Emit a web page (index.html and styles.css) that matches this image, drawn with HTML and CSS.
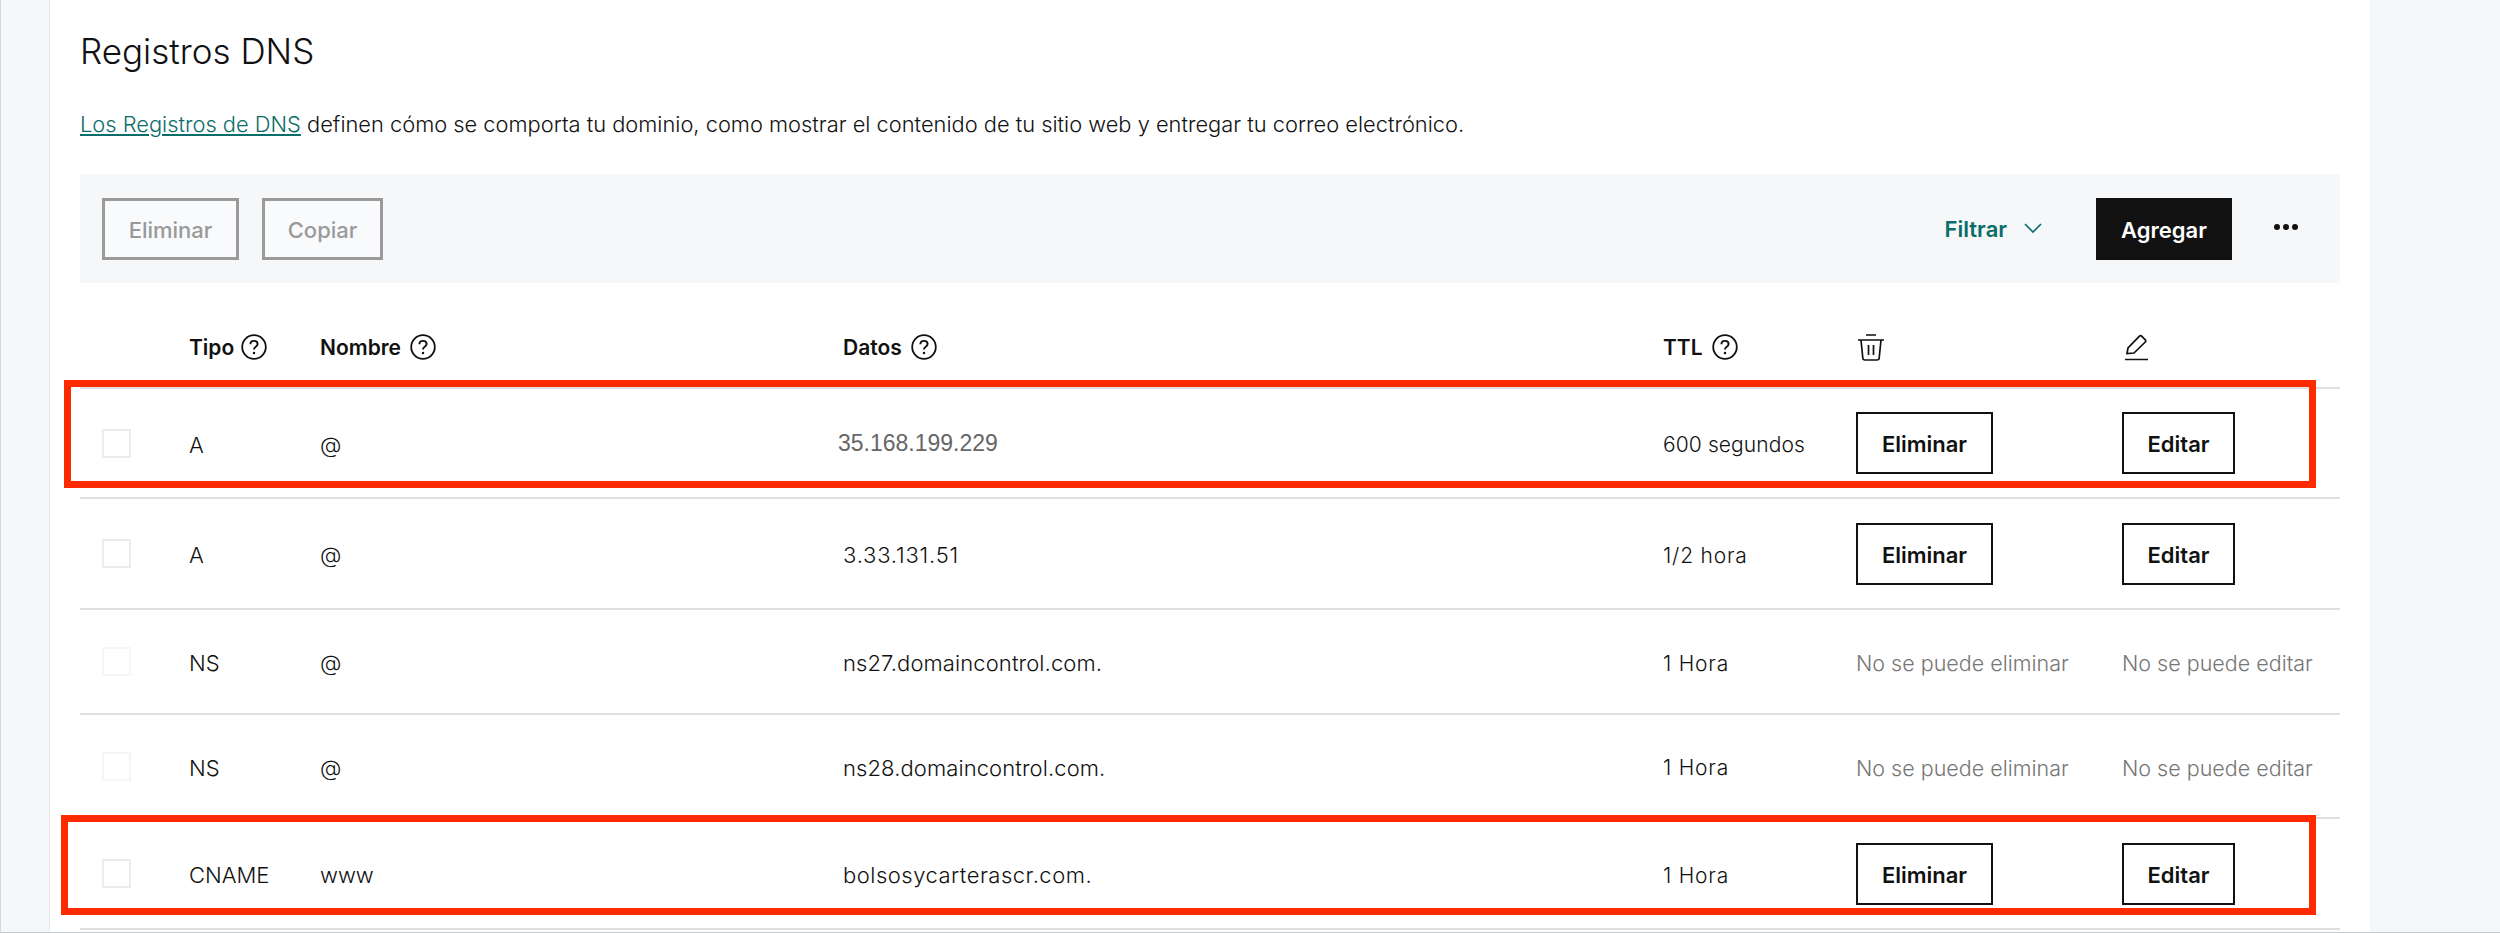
FILE: index.html
```html
<!DOCTYPE html>
<html lang="es">
<head>
    <meta charset="UTF-8">
    <meta name="viewport" content="width=device-width, initial-scale=1.0">
    <title>Registros DNS</title>
    <link rel="stylesheet" href="styles.css">
</head>
<body>
    <svg class="icon-defs" width="0" height="0">
        <symbol id="help" viewBox="0 0 26 26">
            <circle cx="13" cy="13" r="11.8" fill="none" stroke="currentColor" stroke-width="1.8"/>
            <path d="M9.4 10.2c0-2 1.6-3.3 3.6-3.3s3.6 1.3 3.6 3.1c0 1.6-1 2.3-2.1 3-1 .7-1.5 1.2-1.5 2.4" fill="none" stroke="currentColor" stroke-width="1.9"/>
            <circle cx="13" cy="19" r="1.25" fill="currentColor"/>
        </symbol>
    </svg>

    <main class="card">
        <h1>Registros DNS</h1>
        <p class="intro"><a href="#">Los Registros de DNS</a> definen cómo se comporta tu dominio, como mostrar el contenido de tu sitio web y entregar tu correo electrónico.</p>

        <div class="toolbar">
            <button class="btn btn-disabled btn-del">Eliminar</button>
            <button class="btn btn-disabled btn-copy">Copiar</button>
            <a class="filter" href="#">Filtrar
                <svg width="18" height="11" viewBox="0 0 18 11"><path d="M1 1l8 8 8-8" fill="none" stroke="currentColor" stroke-width="1.7"/></svg>
            </a>
            <button class="btn btn-primary">Agregar</button>
            <span class="more"><i></i><i></i><i></i></span>
        </div>

        <table class="records">
            <thead>
                <tr>
                    <th class="col-check"></th>
                    <th class="col-type"><span class="th-label">Tipo <svg class="help"><use href="#help"/></svg></span></th>
                    <th class="col-name"><span class="th-label">Nombre <svg class="help"><use href="#help"/></svg></span></th>
                    <th class="col-data"><span class="th-label">Datos <svg class="help"><use href="#help"/></svg></span></th>
                    <th class="col-ttl"><span class="th-label">TTL <svg class="help"><use href="#help"/></svg></span></th>
                    <th class="col-del">
                        <svg class="head-icon" width="26" height="27" viewBox="0 0 26 27" fill="none" stroke="currentColor" stroke-width="1.7">
                            <path d="M0 6h26M8 1h10M3 6l1.8 18c.1 1.300.9 2 2.200 2h12c1.300 0 2.100-.7 2.200-2L23 6M10.500 11v10M15.500 11v10"/>
                        </svg>
                    </th>
                    <th class="col-edit">
                        <svg class="head-icon head-icon-edit" width="24" height="27" viewBox="0 0 24 27" fill="none" stroke="currentColor" stroke-width="1.7">
                            <path d="M2 19.500l1-5.500L14.500 2.200c.6-.6 1.500-.6 2.100 0l3.700 3.700c.6.6.6 1.500 0 2.100L9 19l-7 .5zM0 25.500h23"/>
                        </svg>
                    </th>
                </tr>
            </thead>
            <tbody>
                <tr class="row-tall">
                    <td><span class="check"></span></td>
                    <td class="cell">A</td>
                    <td class="cell">@</td>
                    <td class="cell-edited"><span class="ip-edited">35.168.199.229</span></td>
                    <td class="cell ttl">600 segundos</td>
                    <td><button class="btn btn-outline btn-del">Eliminar</button></td>
                    <td><button class="btn btn-outline btn-edit">Editar</button></td>
                </tr>
                <tr class="row-wide">
                    <td><span class="check"></span></td>
                    <td class="cell">A</td>
                    <td class="cell">@</td>
                    <td class="cell data data-ip">3.33.131.51</td>
                    <td class="cell ttl ttl-short">1/2 hora</td>
                    <td><button class="btn btn-outline btn-del">Eliminar</button></td>
                    <td><button class="btn btn-outline btn-edit">Editar</button></td>
                </tr>
                <tr class="row-locked">
                    <td><span class="check"></span></td>
                    <td class="cell">NS</td>
                    <td class="cell">@</td>
                    <td class="cell data">ns27.domaincontrol.com.</td>
                    <td class="cell ttl ttl-short">1 Hora</td>
                    <td class="cell muted">No se puede eliminar</td>
                    <td class="cell muted">No se puede editar</td>
                </tr>
                <tr class="row-locked row-locked-last">
                    <td><span class="check"></span></td>
                    <td class="cell">NS</td>
                    <td class="cell">@</td>
                    <td class="cell data">ns28.domaincontrol.com.</td>
                    <td class="cell ttl ttl-short">1 Hora</td>
                    <td class="cell muted">No se puede eliminar</td>
                    <td class="cell muted">No se puede editar</td>
                </tr>
                <tr class="row-wide">
                    <td><span class="check"></span></td>
                    <td class="cell">CNAME</td>
                    <td class="cell">www</td>
                    <td class="cell data data-host">bolsosycarterascr.com.</td>
                    <td class="cell ttl ttl-short">1 Hora</td>
                    <td><button class="btn btn-outline btn-del">Eliminar</button></td>
                    <td><button class="btn btn-outline btn-edit">Editar</button></td>
                </tr>
            </tbody>
        </table>
    </main>

    <!-- red marks drawn over the screenshot -->
    <div class="mark mark-first"></div>
    <div class="mark mark-last"></div>
</body>
</html>
```

FILE: styles.css
```css
* {
    box-sizing: border-box;
}

html, body {
    height: 933px;
    overflow: hidden;
}

body {
    margin: 0;
    position: relative;
    font-family: 'Inter', sans-serif;
    font-size: 22px;
    color: #111;
    background-color: #f5f7f8;
    border-left: 1px solid #d4d7da;
    border-bottom: 1px solid #c8cbce;
}

.icon-defs {
    position: absolute;
}

.card {
    margin-left: 48px;
    width: 2321px;
    height: 932px;
    padding: 29px 30px 0 30px;
    background-color: #fff;
    border-left: 1px solid #e4e6e9;
}

h1 {
    margin: 0;
    font-size: 35px;
    line-height: 44px;
    font-weight: 300;
}

.intro {
    margin: 34px 0 0;
    font-size: 21.85px;
    line-height: 34px;
    font-weight: 300;
}

.intro a {
    color: #0a6d6a;
}

.toolbar {
    display: flex;
    align-items: center;
    height: 109px;
    margin-top: 33px;
    padding: 0 42px 0 22px;
    background-color: #f5f7f8;
}

.btn {
    height: 62px;
    padding: 2px 0 0;
    font-family: inherit;
    font-size: 22px;
    border-radius: 0;
    cursor: pointer;
}

.btn-del {
    width: 137px;
}

.btn-copy {
    width: 121px;
    margin-left: 23px;
}

.btn-edit {
    width: 113px;
}

.btn-disabled {
    color: #999;
    font-weight: 500;
    background-color: #f9fafb;
    border: 3px solid #9a9a9a;
}

.btn-primary {
    width: 136px;
    color: #fff;
    font-weight: 600;
    background-color: #111;
    border: none;
}

.btn-outline {
    color: #111;
    font-weight: 600;
    background-color: #fff;
    border: 2px solid #111;
}

.filter {
    display: flex;
    align-items: center;
    gap: 17px;
    margin-left: auto;
    margin-right: 54px;
    color: #0a6d6a;
    font-weight: 600;
    text-decoration: none;
}

.more {
    display: flex;
    gap: 3px;
    margin-left: 42px;
    margin-bottom: 4px;
}

.more i {
    width: 6px;
    height: 6px;
    border-radius: 50%;
    background-color: #111;
}

.records {
    width: 2260px;
    margin-top: 0;
    table-layout: fixed;
    border-collapse: collapse;
}

.records th {
    height: 105px;
    padding: 24px 0 0;
    text-align: left;
    font-size: 21px;
    font-weight: 600;
}

.records td {
    padding: 0;
    font-weight: 300;
    border-top: 2px solid #e0e0e0;
}

.records .cell {
    padding-top: 3px;
}

.records tbody tr:last-child {
    border-bottom: 2px solid #e0e0e0;
}

.row-tall td {
    height: 110px;
}

.row-wide td {
    height: 111px;
}

.row-locked td {
    height: 105px;
}

.row-locked-last td {
    height: 104px;
}

.col-check {
    width: 109px;
}

.col-type {
    width: 131px;
}

.col-name {
    width: 523px;
}

.col-data {
    width: 820px;
}

.col-ttl {
    width: 193px;
}

.col-del {
    width: 266px;
}

.th-label {
    display: inline-flex;
    align-items: center;
    gap: 9px;
}

.col-type .th-label {
    gap: 7px;
}

.help {
    width: 26px;
    height: 26px;
}

.head-icon {
    display: block;
    margin-left: 2px;
}

.head-icon-edit {
    margin-left: 3px;
}

.check {
    display: block;
    width: 29px;
    height: 29px;
    margin-left: 22px;
    background-color: #fff;
    border: 2px solid #ececec;
}

.row-locked .check {
    border-color: #f5f5f5;
}

.data {
    letter-spacing: 0.1px;
}

.records .data-ip {
    letter-spacing: 0.8px;
}

.records .data-host {
    letter-spacing: 0.5px;
}

.ttl {
    font-size: 21px;
    letter-spacing: 0.1px;
}

.records .ttl-short {
    letter-spacing: 0.8px;
}

.muted {
    font-size: 21.5px;
    color: #767676;
}

/* this one value was pasted in over the original, hence the other font */
.ip-edited {
    margin-left: -5px;
    font-family: 'Liberation Sans', sans-serif;
    font-size: 23px;
    font-weight: 400;
    color: #666;
}

.mark {
    position: absolute;
    border: 7px solid #fe2a00;
}

.mark-first {
    left: 63px;
    top: 380px;
    width: 2252px;
    height: 108px;
}

.mark-last {
    left: 60px;
    top: 815px;
    width: 2255px;
    height: 100px;
}
```
